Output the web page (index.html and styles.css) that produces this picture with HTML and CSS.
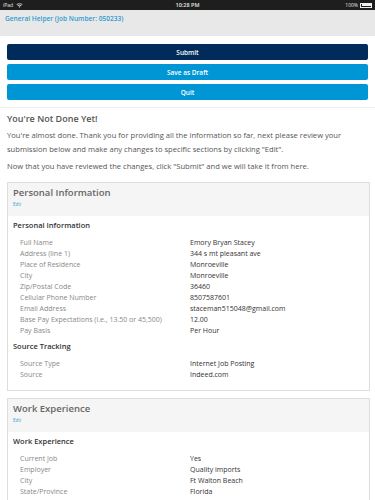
FILE: index.html
```html
<!DOCTYPE html>
<html>
<head>
<meta charset="utf-8">
<link rel="stylesheet" href="styles.css">
</head>
<body>
<div class="statusbar">
  <div class="sb-left">iPad
    <svg class="wifi" viewBox="0 0 10 8" width="7" height="5"><path d="M5 7.5 L3.6 6 A2 2 0 0 1 6.4 6 Z M1.8 4.2 A4.5 4.5 0 0 1 8.2 4.2 L7.3 5.1 A3.2 3.2 0 0 0 2.7 5.1 Z M0 2.4 A7 7 0 0 1 10 2.4 L9.1 3.3 A5.8 5.8 0 0 0 0.9 3.3 Z" fill="#ddd"/></svg>
  </div>
  <div class="sb-center">10:28 PM</div>
  <div class="sb-right">100%
    <span class="battery"><span class="battery-fill"></span></span>
  </div>
</div>
<div class="appheader">
  <div class="apptitle">General Helper (Job Number: 050233)</div>
</div>
<div class="actions">
  <button class="btn btn-dark">Submit</button>
  <button class="btn btn-blue">Save as Draft</button>
  <button class="btn btn-blue">Quit</button>
</div>
<div class="main">
  <h1 class="heading">You're Not Done Yet!</h1>
  <p class="para">You're almost done. Thank you for providing all the information so far, next please review your submission below and make any changes to specific sections by clicking "Edit".</p>
  <p class="para para2">Now that you have reviewed the changes, click "Submit" and we will take it from here.</p>

  <div class="card">
    <div class="card-head">
      <div class="card-title">Personal Information</div>
      <a class="edit">Edit</a>
    </div>
    <div class="card-body">
      <div class="subhead">Personal Information</div>
      <div class="rows">
        <div class="label">Full Name</div><div class="value">Emory Bryan Stacey</div>
        <div class="label">Address (line 1)</div><div class="value">344 s mt pleasant ave</div>
        <div class="label">Place of Residence</div><div class="value">Monroeville</div>
        <div class="label">City</div><div class="value">Monroeville</div>
        <div class="label">Zip/Postal Code</div><div class="value">36460</div>
        <div class="label">Cellular Phone Number</div><div class="value">8507587601</div>
        <div class="label">Email Address</div><div class="value">staceman515048@gmail.com</div>
        <div class="label">Base Pay Expectations (i.e., 13.50 or 45,500)</div><div class="value">12.00</div>
        <div class="label">Pay Basis</div><div class="value">Per Hour</div>
      </div>
      <div class="subhead subhead2">Source Tracking</div>
      <div class="rows">
        <div class="label">Source Type</div><div class="value">Internet Job Posting</div>
        <div class="label">Source</div><div class="value">Indeed.com</div>
      </div>
    </div>
  </div>

  <div class="card">
    <div class="card-head">
      <div class="card-title">Work Experience</div>
      <a class="edit">Edit</a>
    </div>
    <div class="card-body">
      <div class="subhead">Work Experience</div>
      <div class="rows">
        <div class="label">Current Job</div><div class="value">Yes</div>
        <div class="label">Employer</div><div class="value">Quality imports</div>
        <div class="label">City</div><div class="value">Ft Walton Beach</div>
        <div class="label">State/Province</div><div class="value">Florida</div>
      </div>
    </div>
  </div>
</div>
</body>
</html>
```

FILE: styles.css
```css
* { box-sizing: border-box; }
html, body { margin: 0; padding: 0; }
body {
  font-family: "Open Sans", "Noto Sans", sans-serif;
  background: #fff;
  color: #555;
  width: 375px;
  overflow: hidden;
}
.statusbar {
  height: 10px;
  background: #1e1e1e;
  color: #e6e6e6;
  font-size: 5px;
  display: flex;
  align-items: center;
  justify-content: space-between;
  padding: 0 3px;
}
.sb-left { display: flex; align-items: center; gap: 3px; width: 60px; }
.sb-center { font-weight: 600; font-size: 5.5px; }
.sb-right { display: flex; align-items: center; gap: 2px; width: 60px; justify-content: flex-end; }
.battery {
  display: inline-block;
  width: 12px; height: 5px;
  border: 0.5px solid #eee;
  padding: 0.5px;
}
.battery-fill { display: block; width: 100%; height: 100%; background: #f2f2f2; }
.appheader {
  height: 26px;
  background: #e8e8e8;
  padding: 4px 5px 0;
}
.apptitle {
  color: #2e9bd3;
  font-size: 6.6px;
  font-weight: 600;
  line-height: 10px;
}
.actions {
  padding: 8px 7px 7px;
  display: flex;
  flex-direction: column;
  gap: 4px;
  border-bottom: 1px solid #eee;
}
.btn {
  height: 16px;
  border: 0;
  border-radius: 2px;
  color: #fff;
  font-family: inherit;
  font-size: 6.5px;
  font-weight: 600;
  padding: 0;
}
.btn-dark { background: #002b5a; }
.btn-blue { background: #0095d5; }
.main { padding: 0 7px; }
.heading {
  margin: 5px 0 0;
  font-size: 9px;
  line-height: 12px;
  font-weight: 600;
  color: #555;
}
.para {
  margin: 4px 0 0;
  font-size: 7.6px;
  line-height: 13.6px;
  color: #555;
}
.para2 { margin-top: 4px; }
.card {
  border: 1px solid #ddd;
  margin-top: 8px;
  margin-right: -2px;
}
.card + .card { margin-top: 7px; }
.card-head {
  background: #f5f5f5;
  padding: 3px 5px 9px;
  height: 33px;
}
.card-title {
  font-size: 9.5px;
  line-height: 13px;
  font-weight: 600;
  color: #666;
}
.edit {
  display: block;
  font-size: 4.5px;
  line-height: 8px;
  margin-top: 1px;
  color: #2e9bd3;
}
.card-body { padding: 4px 5px 10px; }
.subhead {
  font-size: 7.5px;
  line-height: 11px;
  font-weight: 600;
  color: #333;
}
.subhead2 { margin-top: 5px; }
.rows {
  display: grid;
  grid-template-columns: 170px 1fr;
  padding-left: 7px;
  margin-top: 6px;
  font-size: 7px;
  line-height: 11px;
}
.label { color: #888; }
.value { color: #333; }
```
